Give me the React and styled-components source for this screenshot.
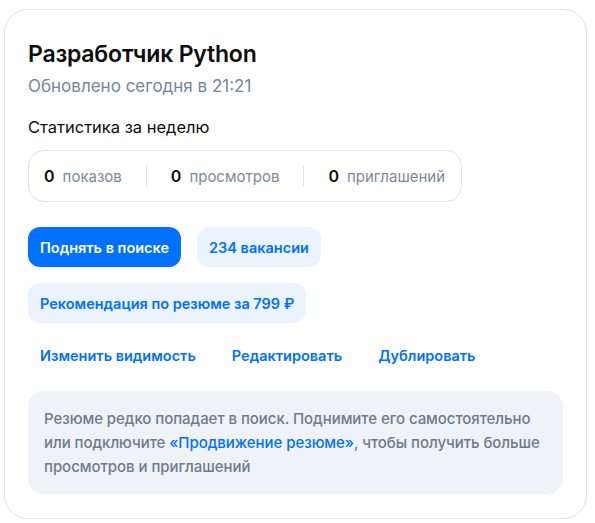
import React from "react";
import styled, { createGlobalStyle } from "styled-components";

const Global = createGlobalStyle`
  html, body { margin: 0; padding: 0; background: #ffffff; }
  body { font-family: Inter, "Noto Sans", sans-serif; -webkit-font-smoothing: antialiased; }
`;

const Card = styled.section`
  box-sizing: border-box;
  margin: 9px 8px 0 4px;
  height: 510px;
  border: 1px solid #dde3ea;
  border-radius: 24px;
  padding: 29px 23px 24px;
  display: flex;
  flex-direction: column;
`;

const Title = styled.h1`
  margin: 0;
  font-size: 23px;
  line-height: 30px;
  font-weight: 600;
  color: #0d0d0d;
  letter-spacing: -0.2px;
`;

const Updated = styled.div`
  margin-top: 5px;
  font-size: 17px;
  line-height: 24px;
  color: #768694;
`;

const SectionLabel = styled.div`
  margin-top: 17px;
  font-size: 16.5px;
  line-height: 24px;
  color: #0d0d0d;
`;

const Stats = styled.div`
  margin-top: 11px;
  align-self: flex-start;
  display: flex;
  align-items: center;
  height: 52px;
  box-sizing: border-box;
  border: 1px solid #dde3ea;
  border-radius: 16px;
  padding: 0 16px 0 15px;
`;

const Stat = styled.div`
  display: flex;
  align-items: baseline;
  gap: 8px;
  padding: 0 ${p => (p.$last ? 0 : 24)}px 0 ${p => (p.$first ? 0 : 24)}px;
  border-left: ${p => (p.$first ? "none" : "1px solid #dde3ea")};
  height: 20px;
  line-height: 20px;
`;

const StatValue = styled.span`
  font-size: 16px;
  font-weight: 600;
  color: #0d0d0d;
`;

const StatLabel = styled.span`
  font-size: 15px;
  color: #7c8a97;
`;

const Row = styled.div`
  display: flex;
  gap: 16px;
  margin-top: ${p => p.$mt}px;
`;

const Button = styled.button`
  height: 40px;
  padding: 0 12px;
  border: none;
  border-radius: 12px;
  font-family: inherit;
  font-size: 14.5px;
  font-weight: 600;
  background: ${p => (p.$primary ? "#0070ff" : p.$ghost ? "transparent" : "#ebf3ff")};
  color: ${p => (p.$primary ? "#ffffff" : "#0070ff")};
  cursor: pointer;
`;

const LinkRow = styled.div`
  display: flex;
  gap: 12px;
  margin-top: 12px;
`;

const Info = styled.div`
  margin-top: 16px;
  background: #eff2f7;
  border-radius: 16px;
  padding: 16px 16px 15px;
  font-size: 15px;
  line-height: 24px;
  font-weight: 500;
  color: #6d7c8a;
  letter-spacing: -0.05px;
`;

const InfoLink = styled.a`
  color: #0070ff;
  text-decoration: none;
`;

export default function App() {
  return (
    <>
      <Global />
      <Card>
        <Title>Разработчик Python</Title>
        <Updated>Обновлено сегодня в 21:21</Updated>
        <SectionLabel>Статистика за неделю</SectionLabel>
        <Stats>
          <Stat $first>
            <StatValue>0</StatValue>
            <StatLabel>показов</StatLabel>
          </Stat>
          <Stat>
            <StatValue>0</StatValue>
            <StatLabel>просмотров</StatLabel>
          </Stat>
          <Stat $last>
            <StatValue>0</StatValue>
            <StatLabel>приглашений</StatLabel>
          </Stat>
        </Stats>
        <Row $mt={25}>
          <Button $primary>Поднять в поиске</Button>
          <Button>234 вакансии</Button>
        </Row>
        <Row $mt={16}>
          <Button>Рекомендация по резюме за 799 ₽</Button>
        </Row>
        <LinkRow>
          <Button $ghost>Изменить видимость</Button>
          <Button $ghost>Редактировать</Button>
          <Button $ghost>Дублировать</Button>
        </LinkRow>
        <Info>
          Резюме редко попадает в поиск. Поднимите его самостоятельно или подключите{" "}
          <InfoLink href="#">«Продвижение резюме»</InfoLink>, чтобы получить больше просмотров и
          приглашений
        </Info>
      </Card>
    </>
  );
}
